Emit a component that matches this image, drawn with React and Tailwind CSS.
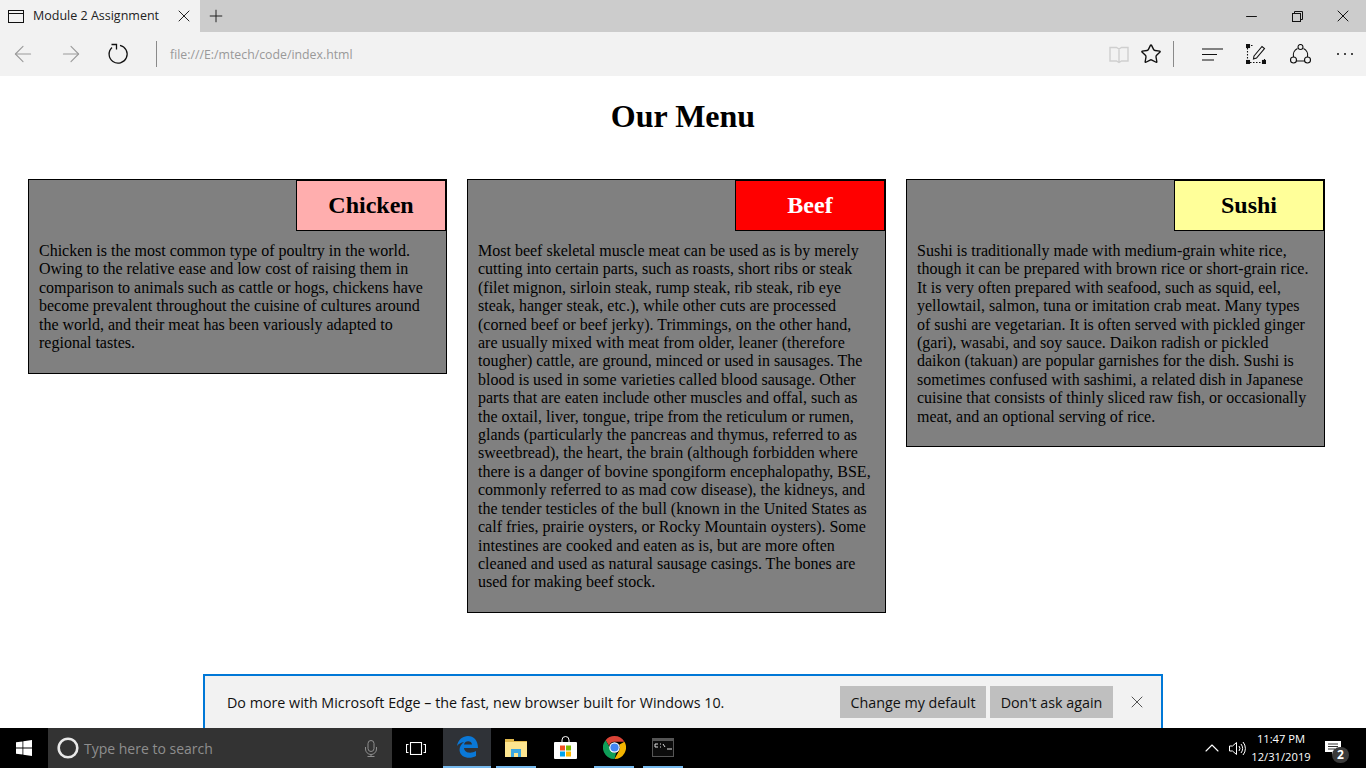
import { Minus, X, Plus, ArrowLeft, ArrowRight, Star, ChevronUp } from "lucide-react";

const uiFont = "font-['Open_Sans','Noto_Sans',sans-serif]";

const dishes = [
  {
    name: "Chicken",
    tag: "bg-[#ffaeae] text-black",
    text: "Chicken is the most common type of poultry in the world. Owing to the relative ease and low cost of raising them in comparison to animals such as cattle or hogs, chickens have become prevalent throughout the cuisine of cultures around the world, and their meat has been variously adapted to regional tastes.",
  },
  {
    name: "Beef",
    tag: "bg-[#ff0000] text-white",
    text: "Most beef skeletal muscle meat can be used as is by merely cutting into certain parts, such as roasts, short ribs or steak (filet mignon, sirloin steak, rump steak, rib steak, rib eye steak, hanger steak, etc.), while other cuts are processed (corned beef or beef jerky). Trimmings, on the other hand, are usually mixed with meat from older, leaner (therefore tougher) cattle, are ground, minced or used in sausages. The blood is used in some varieties called blood sausage. Other parts that are eaten include other muscles and offal, such as the oxtail, liver, tongue, tripe from the reticulum or rumen, glands (particularly the pancreas and thymus, referred to as sweetbread), the heart, the brain (although forbidden where there is a danger of bovine spongiform encephalopathy, BSE, commonly referred to as mad cow disease), the kidneys, and the tender testicles of the bull (known in the United States as calf fries, prairie oysters, or Rocky Mountain oysters). Some intestines are cooked and eaten as is, but are more often cleaned and used as natural sausage casings. The bones are used for making beef stock.",
  },
  {
    name: "Sushi",
    tag: "bg-[#ffff99] text-black",
    text: "Sushi is traditionally made with medium-grain white rice, though it can be prepared with brown rice or short-grain rice. It is very often prepared with seafood, such as squid, eel, yellowtail, salmon, tuna or imitation crab meat. Many types of sushi are vegetarian. It is often served with pickled ginger (gari), wasabi, and soy sauce. Daikon radish or pickled daikon (takuan) are popular garnishes for the dish. Sushi is sometimes confused with sashimi, a related dish in Japanese cuisine that consists of thinly sliced raw fish, or occasionally meat, and an optional serving of rice.",
  },
];

const TabBar = () => (
  <div className={`flex h-8 shrink-0 bg-[#cccccc] ${uiFont}`}>
    <div className="flex w-[200px] items-center bg-[#f2f2f2] pl-2">
      <svg width="16" height="13" viewBox="0 0 16 13" fill="none" stroke="#111" strokeWidth="1">
        <rect x="0.5" y="0.5" width="15" height="12" />
        <path d="M0.5 3.5h15" />
      </svg>
      <span className="ml-[9px] w-[126px] whitespace-nowrap pt-[1px] text-[12.5px] text-[#222]">Module 2 Assignment</span>
      <X size={20} strokeWidth={1.2} className="ml-[15px] text-[#222]" />
    </div>
    <Plus size={20} strokeWidth={1.2} className="ml-[6px] mt-[6px] text-[#222]" />
    <div className="ml-auto flex">
      <div className="flex w-[46px] items-center justify-center"><Minus size={17} strokeWidth={1.4} className="text-[#111]" /></div>
      <div className="flex w-[46px] items-center justify-center">
        <svg width="11" height="11" viewBox="0 0 11 11" fill="none" stroke="#111" strokeWidth="1">
          <rect x="0.5" y="2.5" width="8" height="8" />
          <path d="M2.5 2.5v-2h8v8h-2" />
        </svg>
      </div>
      <div className="flex w-[46px] items-center justify-center"><X size={20} strokeWidth={1.2} className="text-[#111]" /></div>
    </div>
  </div>
);

const Toolbar = () => (
  <div className={`flex h-11 shrink-0 items-center bg-[#f2f2f2] ${uiFont}`}>
    <ArrowLeft size={26} strokeWidth={1} className="ml-[10px] text-[#9a9a9a]" />
    <ArrowRight size={26} strokeWidth={1} className="ml-[22px] text-[#9a9a9a]" />
    <svg className="ml-[23px]" width="22" height="22" viewBox="0 0 22 22" fill="none" stroke="#111" strokeWidth="1.3">
      <path d="M13 2.300A9 9 0 1 1 5 4.500M4.500 1.500h5v5" />
    </svg>
    <div className="ml-[27px] h-[26px] w-px bg-[#8a8a8a]" />
    <span className="ml-[13px] pt-[2px] text-[12.3px] text-[#999999]">file:///E:/mtech/code/index.html</span>
    <div className="ml-auto flex items-center">
      <svg width="20" height="19" viewBox="0 0 20 19" fill="none" stroke="#cfcfcf" strokeWidth="1.4">
        <path d="M1 2.500h6.500l2.500 1.500 2.500-1.500H19V16h-6.500L10 17.500 7.500 16H1zM10 4v13" />
      </svg>
      <Star size={22} strokeWidth={1.5} className="ml-[11px] text-[#111]" />
      <div className="ml-[11px] h-[26px] w-px bg-[#8a8a8a]" />
      <svg className="ml-[28px]" width="21" height="15" viewBox="0 0 21 15" stroke="#111" strokeWidth="1.2">
        <path d="M0 2h21M0 7.500h15M0 13h12" />
      </svg>
      <svg className="ml-[23px]" width="20" height="20" viewBox="0 0 20 20" fill="none" stroke="#111" strokeWidth="1.1">
        <path d="M1.500 4v12M18.500 15v1M5 1.500h3M4 18.500h12" strokeDasharray="1.500 1.500" />
        <rect x="0.500" y="0.500" width="3" height="3" fill="#111" />
        <rect x="0.500" y="16.500" width="3" height="3" fill="#111" />
        <rect x="16.500" y="16.500" width="3" height="3" fill="#111" />
        <path d="M8 12l8-9.500 2.500 2-8 9.500-3 1z" />
      </svg>
      <svg className="ml-[24px]" width="21" height="20" viewBox="0 0 21 20" fill="none" stroke="#111" strokeWidth="1.1">
        <path d="M7.500 4.500a7.500 7.500 0 0 0-4 8.500M13.500 4.500a7.500 7.500 0 0 1 4 8.500M6 17h9" />
        <circle cx="10.500" cy="3" r="2.500" />
        <circle cx="3.500" cy="16" r="3" />
        <circle cx="17.500" cy="16" r="3" />
      </svg>
      <div className="ml-[26px] mr-[13px] flex gap-[5px]">
        <div className="h-[2px] w-[2px] rounded-full bg-[#111]" />
        <div className="h-[2px] w-[2px] rounded-full bg-[#111]" />
        <div className="h-[2px] w-[2px] rounded-full bg-[#111]" />
      </div>
    </div>
  </div>
);

const MenuCard = ({ dish }) => (
  <section className="border border-black bg-[#808080] pb-[20.4px]">
    <div className="flex justify-end">
      <h2 className={`flex h-[51px] w-[150px] items-center justify-center border-[1.5px] border-black pb-[2px] text-[24px] font-bold ${dish.tag}`}>
        {dish.name}
      </h2>
    </div>
    <p className="mt-[11px] pl-[10px] pr-[12px] leading-[18.4px] text-black">{dish.text}</p>
  </section>
);

const EdgeBanner = () => (
  <div className={`absolute bottom-0 left-[203px] flex h-[54px] w-[960px] items-center border-2 border-b-0 border-[#0078d7] bg-[#f2f2f2] pl-[22px] ${uiFont}`}>
    <span className="whitespace-nowrap pt-[1px] text-[14.3px] text-[#111]">Do more with Microsoft Edge – the fast, new browser built for Windows 10.</span>
    <button className="ml-auto h-8 w-[146px] bg-[#bfbfbf] pt-[1px] text-[14.3px] text-[#111]">Change my default</button>
    <button className="ml-1 h-8 w-[123px] bg-[#bfbfbf] pt-[1px] text-[14.3px] text-[#111]">Don't ask again</button>
    <X size={20} strokeWidth={1} className="ml-[14px] mr-[14px] text-[#333]" />
  </div>
);

const Taskbar = () => (
  <div className={`flex h-10 shrink-0 bg-black ${uiFont}`}>
    <div className="flex w-12 items-center justify-center">
      <svg width="16" height="16" viewBox="0 0 16 16" fill="#fff">
        <path d="M0 2.300l6.500-.9v6.200H0zM7.300 1.300L16 0v7.600H7.300zM0 8.400h6.500v6.200L0 13.700zM7.300 8.400H16V16l-8.700-1.200z" />
      </svg>
    </div>
    <div className="flex w-[344px] items-center bg-[#333333]">
      <svg className="ml-[9px]" width="22" height="22" viewBox="0 0 22 22" fill="none" stroke="#e8e8e8" strokeWidth="2.6">
        <circle cx="11" cy="11" r="9.300" />
      </svg>
      <span className="ml-[5px] text-[14px] text-[#8e8e8e]">Type here to search</span>
      <svg className="ml-auto mr-[15px]" width="12" height="17" viewBox="0 0 12 17" fill="none" stroke="#8e8e8e" strokeWidth="1">
        <rect x="3" y="0.500" width="6" height="11" rx="3" />
        <path d="M0.500 7v2a5.500 5.500 0 0 0 11 0V7M6 14.500v2M2.500 16.500h7" />
      </svg>
    </div>
    <div className="flex w-[48px] items-center justify-center">
      <svg width="20" height="13" viewBox="0 0 20 13" fill="none" stroke="#fff" strokeWidth="1.1">
        <rect x="4.500" y="0.500" width="11" height="12" />
        <path d="M2.500 2.500H0.500v8h2M17.500 2.500h2v8h-2" />
      </svg>
    </div>
    <div className="ml-[3px] flex w-12 items-center justify-center border-b-2 border-[#76b9ed] bg-[#2f3237]">
      <svg width="22" height="22" viewBox="0 0 22 22">
        <path
          fill="#0a78d7"
          d="M1 10C2 3.500 7 0 12 0c5.500 0 10 4 10 12H8c.3 5 7 6 12 3v5c-6 3.500-16 2-16.500-6 0-3 1.500-6 4.500-8-3 .5-5.500 2-7 4zM8 8.500h8c0-4.500-7.500-4.500-8 0z"
        />
      </svg>
    </div>
    <div className="ml-[5px] flex w-10 items-center justify-center border-b-2 border-[#76b9ed]">
      <svg width="22" height="20" viewBox="0 0 22 20">
        <path fill="#e0b84c" d="M0 2h9v2h13v16H0z" />
        <path fill="#fde58f" d="M0 5h22v15H0z" />
        <path fill="#3ba7e0" d="M6 12h10v8h-3v-4H9v4H6z" />
      </svg>
    </div>
    <div className="flex w-[58px] items-center justify-center pb-[2px]">
      <svg width="23" height="23" viewBox="0 0 23 23">
        <path d="M8 6V4a3.500 3.500 0 0 1 7 0v2" fill="none" stroke="#fff" strokeWidth="1" />
        <rect y="6" width="23" height="17" rx="1" fill="#fff" />
        <rect x="6" y="9.500" width="5" height="5" fill="#f25022" />
        <rect x="12" y="9.500" width="5" height="5" fill="#7fba00" />
        <rect x="6" y="15.500" width="5" height="5" fill="#00a4ef" />
        <rect x="12" y="15.500" width="5" height="5" fill="#ffb900" />
      </svg>
    </div>
    <div className="flex w-10 items-center justify-center border-b-2 border-[#76b9ed]">
      <svg width="23" height="23" viewBox="0 0 24 24">
        <path fill="#db4437" d="M12 0a12 12 0 0 1 10.400 6H12a6 6 0 0 0-5.700 4.100L2.700 4.400A12 12 0 0 1 12 0z" />
        <path fill="#f4b400" d="M22.400 6A12 12 0 0 1 12 24l4.800-8.500a6 6 0 0 0 0-6.500z" />
        <path fill="#0f9d58" d="M12 24A12 12 0 0 1 2.700 4.400l5.100 8.900a6 6 0 0 0 5.800 4.500z" />
        <circle cx="12" cy="12" r="5.500" fill="#fff" />
        <circle cx="12" cy="12" r="4.300" fill="#4285f4" />
      </svg>
    </div>
    <div className="ml-[9px] flex w-10 items-center justify-center border-b-2 border-[#76b9ed]">
      <svg width="22" height="19" viewBox="0 0 22 19">
        <rect width="22" height="19" fill="#555" />
        <rect x="1" y="3" width="20" height="15" fill="#0c0c0c" />
        <path d="M3 6h3M3 6v3h3M8 6h1M8 9h1M11 6l2 3M15 11h5" stroke="#ddd" strokeWidth="1" fill="none" />
      </svg>
    </div>
    <div className="ml-auto flex items-center text-white">
      <ChevronUp size={24} strokeWidth={1.1} />
      <svg className="ml-[5px]" width="17" height="15" viewBox="0 0 17 15" fill="none" stroke="#fff" strokeWidth="1">
        <path d="M0.500 5v5h3l4 3.500v-12l-4 3.500zM10 5a4 4 0 0 1 0 5M12 3a7 7 0 0 1 0 9M14 1a10 10 0 0 1 0 13" />
      </svg>
      <div className="ml-[3px] flex w-[64px] flex-col items-center text-[11.2px] leading-[18px]">
        <span>11:47 PM</span>
        <span>12/31/2019</span>
      </div>
      <div className="relative ml-[12px] mr-[25px] w-[16px]">
        <svg width="16" height="15" viewBox="0 0 16 15">
          <path fill="#fff" d="M0 0h16v11h-6l-3 3v-3H0z" />
          <path stroke="#333" strokeWidth="1" d="M3 3h10M3 5.500h10M3 8h7" />
        </svg>
        <div className="absolute left-[7px] top-[6px] flex h-4 w-[17px] items-center justify-center rounded-full bg-[#3a3a3a] text-[12px] font-bold">2</div>
      </div>
    </div>
  </div>
);

export default function App() {
  return (
    <div className="flex h-screen flex-col overflow-hidden bg-white">
      <TabBar />
      <Toolbar />
      <main className="relative flex-1 font-['Liberation_Serif',serif] text-[16px]">
        <h1 className="mt-[22px] text-center text-[32px] leading-[37px] font-bold text-black">Our Menu</h1>
        <div className="mt-[44px] ml-[28px] grid grid-cols-[repeat(3,419px)] items-start gap-5">
          {dishes.map((dish) => (
            <MenuCard key={dish.name} dish={dish} />
          ))}
        </div>
        <EdgeBanner />
      </main>
      <Taskbar />
    </div>
  );
}
